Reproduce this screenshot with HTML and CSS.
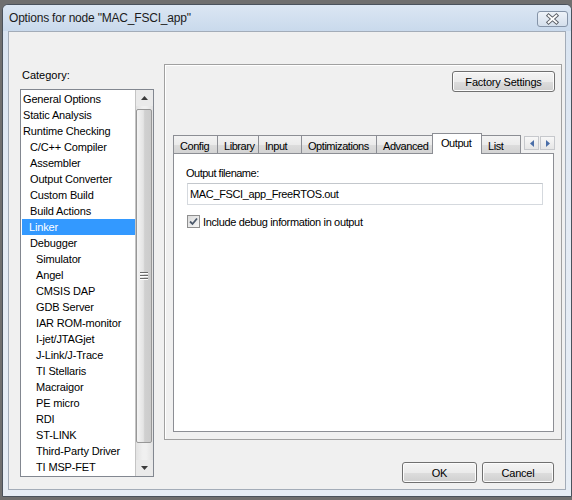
FILE: index.html
```html
<!DOCTYPE html>
<html>
<head>
<meta charset="utf-8">
<link rel="stylesheet" href="styles.css">
</head>
<body>
<div class="window">
  <div class="titlebar">
    <span class="title">Options for node "MAC_FSCI_app"</span>
    <div class="close">
      <svg width="30" height="16" viewBox="0 0 30 16">
        <path d="M11 4.5 L19 11.5 M19 4.5 L11 11.5" stroke="#5a5f66" stroke-width="4" stroke-linecap="square" fill="none"/>
        <path d="M11 4.5 L19 11.5 M19 4.5 L11 11.5" stroke="#ffffff" stroke-width="2" stroke-linecap="square" fill="none"/>
      </svg>
    </div>
  </div>
  <div class="frame">
    <div class="client">
      <div class="left">
        <div class="cat-label">Category:</div>
        <div class="listbox">
          <ul class="items">
            <li class="l0">General Options</li>
            <li class="l0">Static Analysis</li>
            <li class="l0">Runtime Checking</li>
            <li class="l1">C/C++ Compiler</li>
            <li class="l1">Assembler</li>
            <li class="l1">Output Converter</li>
            <li class="l1">Custom Build</li>
            <li class="l1">Build Actions</li>
            <li class="l1 selected">Linker</li>
            <li class="l1">Debugger</li>
            <li class="l2">Simulator</li>
            <li class="l2">Angel</li>
            <li class="l2">CMSIS DAP</li>
            <li class="l2">GDB Server</li>
            <li class="l2">IAR ROM-monitor</li>
            <li class="l2">I-jet/JTAGjet</li>
            <li class="l2">J-Link/J-Trace</li>
            <li class="l2">TI Stellaris</li>
            <li class="l2">Macraigor</li>
            <li class="l2">PE micro</li>
            <li class="l2">RDI</li>
            <li class="l2">ST-LINK</li>
            <li class="l2">Third-Party Driver</li>
            <li class="l2">TI MSP-FET</li>
          </ul>
          <div class="vscroll">
            <div class="sb-btn">
              <svg width="7" height="4" viewBox="0 0 7 4"><path d="M0 4 L3.5 0 L7 4 Z" fill="#3a3a3a"/></svg>
            </div>
            <div class="sb-track">
              <div class="thumb">
                <svg width="8" height="8" viewBox="0 0 8 8">
                  <path d="M0 0.5 H8 M0 3.5 H8 M0 6.5 H8" stroke="#6a6a6a" stroke-width="1"/>
                  <path d="M0 1.5 H8 M0 4.5 H8 M0 7.5 H8" stroke="#ffffff" stroke-width="1"/>
                </svg>
              </div>
            </div>
            <div class="sb-btn">
              <svg width="7" height="4" viewBox="0 0 7 4"><path d="M0 0 L7 0 L3.5 4 Z" fill="#3a3a3a"/></svg>
            </div>
          </div>
        </div>
      </div>
      <div class="right">
        <div class="panel">
          <div class="panel-top">
            <button class="btn factory">Factory Settings</button>
          </div>
          <div class="tabs">
            <div class="tab t-config">Config</div>
            <div class="tab t-library">Library</div>
            <div class="tab t-input">Input</div>
            <div class="tab t-opt">Optimizations</div>
            <div class="tab t-adv">Advanced</div>
            <div class="tab t-output active">Output</div>
            <div class="tab t-list">List</div>
            <div class="tab-arrows">
              <div class="tab-arrow">
                <svg width="4" height="7" viewBox="0 0 4 7"><path d="M4 0 L0 3.5 L4 7 Z" fill="#4a6ea8"/></svg>
              </div>
              <div class="tab-arrow">
                <svg width="4" height="7" viewBox="0 0 4 7"><path d="M0 0 L4 3.5 L0 7 Z" fill="#4a6ea8"/></svg>
              </div>
            </div>
          </div>
          <div class="tabpage">
            <div class="field-label">Output filename:</div>
            <div class="textbox">MAC_FSCI_app_FreeRTOS.out</div>
            <div class="check-row">
              <span class="checkbox">
                <svg width="11" height="11" viewBox="0 0 11 11"><path d="M2 5.5 L4.5 8 L9 2.5" stroke="#4d5a6c" stroke-width="1.8" fill="none"/></svg>
              </span>
              <span class="check-label">Include debug information in output</span>
            </div>
          </div>
        </div>
        <div class="actions">
          <button class="btn ok">OK</button>
          <button class="btn cancel">Cancel</button>
        </div>
      </div>
    </div>
  </div>
</div>
</body>
</html>
```

FILE: styles.css
```css
html, body {
  margin: 0;
  padding: 0;
}
body {
  width: 572px;
  height: 500px;
  overflow: hidden;
  background: #6f6f6f;
  font-family: "Liberation Sans", Arial, sans-serif;
  font-size: 11px;
  color: #000;
}
.window {
  box-sizing: border-box;
  margin: 4px 0 0 2px;
  width: 570px;
  height: 493px;
  border: 1px solid #4a525c;
  border-radius: 6px 6px 0 0;
  background: #dde6f1;
  display: flex;
  flex-direction: column;
}
.titlebar {
  height: 26px;
  flex: none;
  display: flex;
  align-items: flex-start;
  padding-left: 6px;
  padding-right: 3px;
  border-radius: 5px 5px 0 0;
  background: linear-gradient(#dbe6f3, #c9d9ec);
}
.title {
  flex: 1;
  margin-top: 6px;
  font-size: 12px;
  letter-spacing: -0.2px;
  line-height: 14px;
  color: #1b1b1b;
}
.close {
  box-sizing: border-box;
  margin-top: 6px;
  width: 31px;
  height: 16px;
  border: 1px solid #8594a8;
  border-radius: 3px;
  background: linear-gradient(#eef3f9, #d4dfec);
  display: flex;
  align-items: center;
  justify-content: center;
}
.close svg {
  display: block;
}
.frame {
  flex: 1;
  display: flex;
  padding: 0 5px 6px 5px;
  background: linear-gradient(#d9e4f1, #e4ebf4 40%, #e6edf5);
}
.client {
  flex: 1;
  display: flex;
  box-sizing: border-box;
  border: 1px solid #a3acb8;
  background: #f0f0f0;
  padding: 32px 0 0 11px;
}
.left {
  width: 134px;
  flex: none;
  display: flex;
  flex-direction: column;
}
.cat-label {
  margin-top: 4px;
  line-height: 14px;
  padding-left: 2px;
}
.listbox {
  box-sizing: border-box;
  margin-top: 7px;
  height: 388px;
  border: 1px solid #828790;
  background: #fff;
  display: flex;
}
.items {
  flex: 1;
  margin: 0;
  padding: 1px 0 0 1px;
  list-style: none;
}
.items li {
  height: 16px;
  line-height: 16px;
  white-space: nowrap;
  letter-spacing: -0.15px;
}
.items .l0 { padding-left: 1px; }
.items .l1 { padding-left: 8px; }
.items .l2 { padding-left: 14px; }
.items .selected {
  background: #3399ff;
  color: #fff;
  padding-left: 7px;
}
.vscroll {
  width: 17px;
  flex: none;
  display: flex;
  flex-direction: column;
  background: #eaeaea;
  border-left: 1px solid #c4c4c4;
}
.sb-btn {
  height: 16px;
  flex: none;
  display: flex;
  align-items: center;
  justify-content: center;
}
.sb-btn svg { display: block; }
.sb-track {
  flex: 1;
  padding: 3px 1px 17px 0;
  background: linear-gradient(to right, #e2e2e2, #f0f0f0 40%, #f0f0f0 60%, #e2e2e2);
}
.thumb {
  box-sizing: border-box;
  height: 334px;
  border: 1px solid #979797;
  border-radius: 2px;
  background: linear-gradient(to right, #f4f4f4, #e4e4e4 45%, #d0d0d0 55%, #cbcbcb);
  display: flex;
  align-items: center;
  justify-content: center;
}
.thumb svg { display: block; }
.right {
  width: 398px;
  flex: none;
  margin-left: 10px;
  display: flex;
  flex-direction: column;
}
.panel {
  box-sizing: border-box;
  height: 376px;
  border: 1px solid #a0a0a0;
  box-shadow: inset 1px 1px 0 #ffffff;
  display: flex;
  flex-direction: column;
}
.panel-top {
  display: flex;
  justify-content: flex-end;
  padding: 6px 6px 0 0;
}
.btn {
  box-sizing: border-box;
  height: 21px;
  padding: 0;
  border: 1px solid #707070;
  border-radius: 3px;
  background: linear-gradient(#f4f4f4, #ebebeb 50%, #dddddd 51%, #cfcfcf);
  box-shadow: inset 0 0 0 1px #fcfcfc;
  font-family: "Liberation Sans", Arial, sans-serif;
  font-size: 11px;
  letter-spacing: -0.2px;
  color: #000;
}
.factory { width: 103px; }
.tabs {
  display: flex;
  align-items: flex-end;
  height: 21px;
  margin: 41px 0 0 8px;
  position: relative;
  z-index: 1;
}
.tab {
  box-sizing: border-box;
  height: 18px;
  margin-bottom: 1px;
  padding: 2px 0 0 6px;
  line-height: 16px;
  border: 1px solid #8c8e94;
  border-bottom: none;
  margin-right: -1px;
  background: linear-gradient(#f3f3f3, #ebebeb 50%, #dddddd 51%, #d3d3d3);
  letter-spacing: -0.45px;
  white-space: nowrap;
}
.tab.active {
  height: 21px;
  margin-bottom: 0;
  padding: 1px 0 0 8px;
  line-height: 16px;
  background: #fff;
}
.t-config { width: 45px; }
.t-library { width: 42px; }
.t-input { width: 44px; }
.t-opt { width: 76px; }
.t-adv { width: 58px; }
.t-output { width: 50px; margin-left: -1px; }
.t-list { width: 40px; }
.tab-arrows {
  display: flex;
  gap: 1px;
  margin-left: 4px;
  margin-bottom: 4px;
}
.tab-arrow {
  box-sizing: border-box;
  width: 15px;
  height: 14px;
  border: 1px solid #c6c8cc;
  background: linear-gradient(#f8f8f8, #e6e6e6);
  display: flex;
  align-items: center;
  justify-content: center;
}
.tab-arrow svg { display: block; }
.tabpage {
  box-sizing: border-box;
  margin: -1px 7px 0 8px;
  height: 279px;
  border: 1px solid #8c8e94;
  background: #fff;
  padding: 12px 0 0 12px;
}
.field-label {
  line-height: 14px;
  letter-spacing: -0.5px;
}
.textbox {
  box-sizing: border-box;
  margin: 3px 0 0 1px;
  width: 356px;
  height: 22px;
  border: 1px solid #d5d9de;
  border-top-color: #c3c7cc;
  padding-left: 2px;
  line-height: 20px;
  letter-spacing: -0.35px;
}
.check-row {
  display: flex;
  align-items: center;
  margin: 10px 0 0 1px;
  height: 13px;
}
.checkbox {
  box-sizing: border-box;
  width: 13px;
  height: 13px;
  border: 1px solid #8f8f8f;
  background: linear-gradient(135deg, #dcdcdc, #f6f6f6);
  display: flex;
  align-items: center;
  justify-content: center;
}
.checkbox svg { display: block; }
.check-label {
  margin-left: 3px;
  letter-spacing: -0.35px;
  line-height: 14px;
}
.actions {
  display: flex;
  justify-content: flex-end;
  gap: 5px;
  margin-top: 22px;
  padding-right: 8px;
}
.ok { width: 75px; }
.cancel { width: 72px; }
```
